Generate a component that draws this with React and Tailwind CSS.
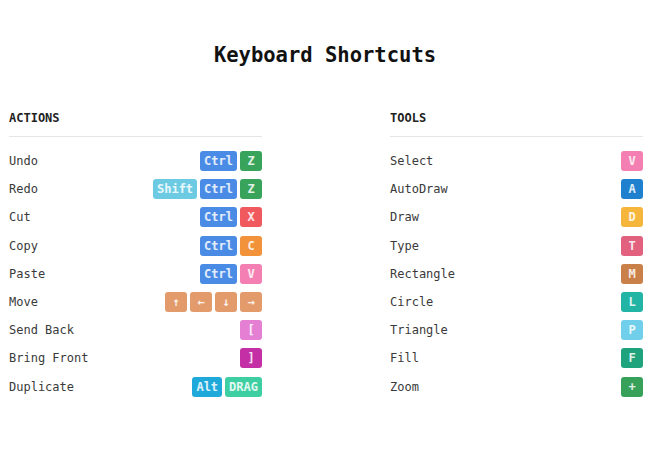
import React from "react";

const actions = [
  { label: "Undo", keys: [["Ctrl", "bg-[#4a8be6]"], ["Z", "bg-[#38a35a]"]] },
  { label: "Redo", keys: [["Shift", "bg-[#6ccbe3]"], ["Ctrl", "bg-[#4a8be6]"], ["Z", "bg-[#38a35a]"]] },
  { label: "Cut", keys: [["Ctrl", "bg-[#4a8be6]"], ["X", "bg-[#f05a5e]"]] },
  { label: "Copy", keys: [["Ctrl", "bg-[#4a8be6]"], ["C", "bg-[#f2923a]"]] },
  { label: "Paste", keys: [["Ctrl", "bg-[#4a8be6]"], ["V", "bg-[#f47fb2]"]] },
  { label: "Move", keys: [["↑", "bg-[#e39b6c]"], ["←", "bg-[#e39b6c]"], ["↓", "bg-[#e39b6c]"], ["→", "bg-[#e39b6c]"]] },
  { label: "Send Back", keys: [["[", "bg-[#e47fd4]"]] },
  { label: "Bring Front", keys: [["]", "bg-[#c42fa6]"]] },
  { label: "Duplicate", keys: [["Alt", "bg-[#1ea9da]"], ["DRAG", "bg-[#3dcfa2]"]] },
];

const tools = [
  { label: "Select", keys: [["V", "bg-[#f47fb2]"]] },
  { label: "AutoDraw", keys: [["A", "bg-[#1f80cf]"]] },
  { label: "Draw", keys: [["D", "bg-[#f6b63c]"]] },
  { label: "Type", keys: [["T", "bg-[#e2617f]"]] },
  { label: "Rectangle", keys: [["M", "bg-[#c98049]"]] },
  { label: "Circle", keys: [["L", "bg-[#22b5a6]"]] },
  { label: "Triangle", keys: [["P", "bg-[#70cfea]"]] },
  { label: "Fill", keys: [["F", "bg-[#1fa37c]"]] },
  { label: "Zoom", keys: [["+", "bg-[#37a15a]"]] },
];

function Key({ k, color }) {
  return (
    <span
      className={`${color} h-[20px] min-w-[22px] px-[4px] rounded-[3px] flex items-center justify-center text-[12px] font-bold text-white/85 leading-none`}
    >
      {k}
    </span>
  );
}

function Section({ title, rows }) {
  return (
    <div className="w-[253px]">
      <div className="text-[12px] leading-[16px] font-bold text-[#222] pb-[10px] border-b border-[#e6e6e6]">
        {title}
      </div>
      <div className="pt-[10px]">
        {rows.map((r) => (
          <div key={r.label} className="h-[28.2px] flex items-center justify-between">
            <span className="text-[12px] text-[#3a3a3a]">{r.label}</span>
            <div className="flex gap-[3px]">
              {r.keys.map(([k, c], i) => (
                <Key key={i} k={k} color={c} />
              ))}
            </div>
          </div>
        ))}
      </div>
    </div>
  );
}

export default function App() {
  return (
    <div
      className="w-[650px] h-[450px] bg-white pt-[41px]"
      style={{ fontFamily: '"DejaVu Sans Mono", "Liberation Mono", monospace' }}
    >
      <h1 className="text-center text-[20.5px] leading-[28px] font-bold text-[#111]">
        Keyboard Shortcuts
      </h1>
      <div className="flex gap-[128px] pl-[9px] mt-[41px]">
        <Section title="ACTIONS" rows={actions} />
        <Section title="TOOLS" rows={tools} />
      </div>
    </div>
  );
}
